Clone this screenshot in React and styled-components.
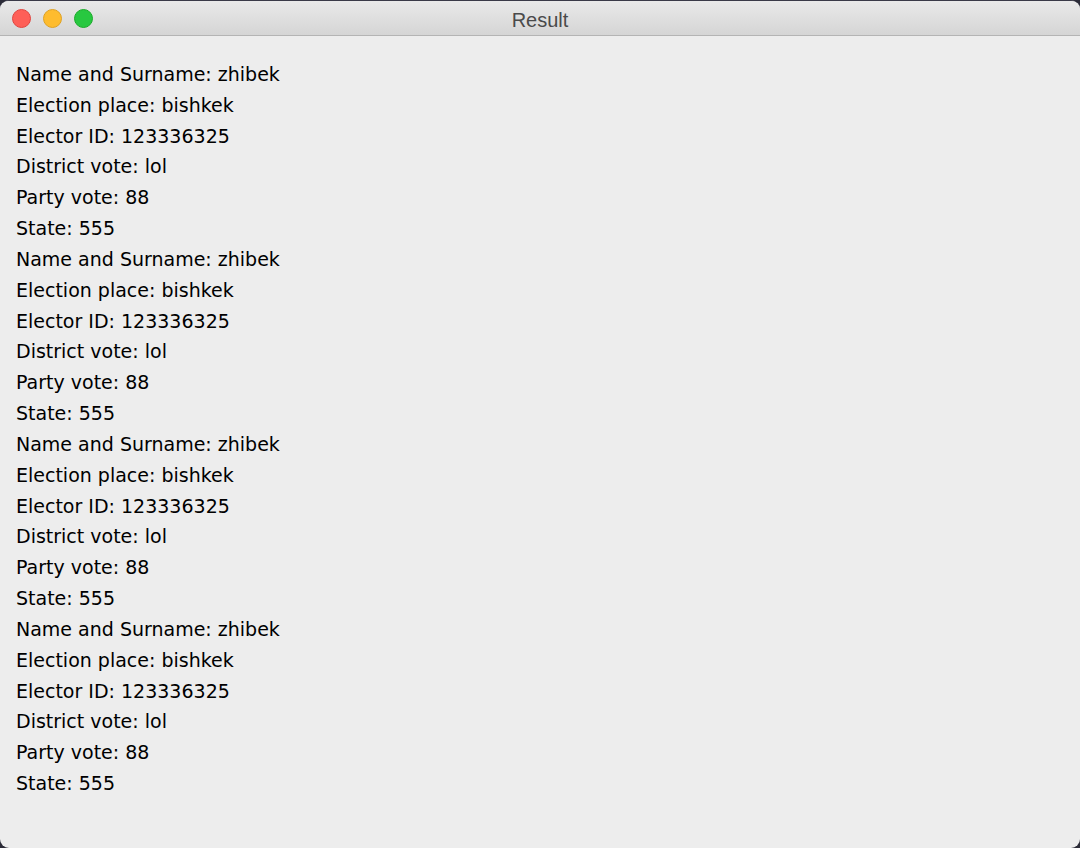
import React from "react";
import styled, { createGlobalStyle } from "styled-components";

const Global = createGlobalStyle`
  html, body { margin: 0; padding: 0; background: #2c2c38; }
  #root { width: 1080px; height: 848px; }
`;

const Window = styled.div`
  width: 1080px;
  height: 848px;
  box-sizing: border-box;
  border-radius: 9px;
  overflow: hidden;
  display: flex;
  flex-direction: column;
  background: #ededed;
  border-top: 1px solid #3a3a48;
`;

const TitleBar = styled.div`
  height: 34px;
  flex: none;
  display: flex;
  align-items: center;
  position: relative;
  background: linear-gradient(#e9e9e9, #d5d5d5);
  border-bottom: 1px solid #b4b4b4;
`;

const Lights = styled.div`
  display: flex;
  gap: 12px;
  padding-left: 12px;
`;

const Light = styled.span`
  width: 19px;
  height: 19px;
  border-radius: 50%;
  box-sizing: border-box;
  background: ${(p) => p.$c};
  border: 1px solid ${(p) => p.$b};
`;

const Title = styled.div`
  position: absolute;
  left: 0;
  right: 0;
  top: 7px;
  text-align: center;
  font-family: "Liberation Sans", Arial, sans-serif;
  font-size: 20px;
  line-height: 24px;
  color: #4a4a4a;
`;

const Content = styled.div`
  padding: 23px 0 0 16px;
  display: flex;
  flex-direction: column;
`;

const Line = styled.div`
  font-family: "DejaVu Sans", sans-serif;
  font-size: 19px;
  line-height: 30.83px;
  color: #000;
  white-space: nowrap;
`;

const record = [
  "Name and Surname: zhibek",
  "Election place: bishkek",
  "Elector ID: 123336325",
  "District vote: lol",
  "Party vote: 88",
  "State: 555",
];

export default function App() {
  const lines = [...record, ...record, ...record, ...record];
  return (
    <>
      <Global />
      <Window>
        <TitleBar>
          <Lights>
            <Light $c="#fe5f57" $b="#e0443e" />
            <Light $c="#febc2e" $b="#dea123" />
            <Light $c="#28c840" $b="#1aab29" />
          </Lights>
          <Title>Result</Title>
        </TitleBar>
        <Content>
          {lines.map((t, i) => (
            <Line key={i}>{t}</Line>
          ))}
        </Content>
      </Window>
    </>
  );
}
